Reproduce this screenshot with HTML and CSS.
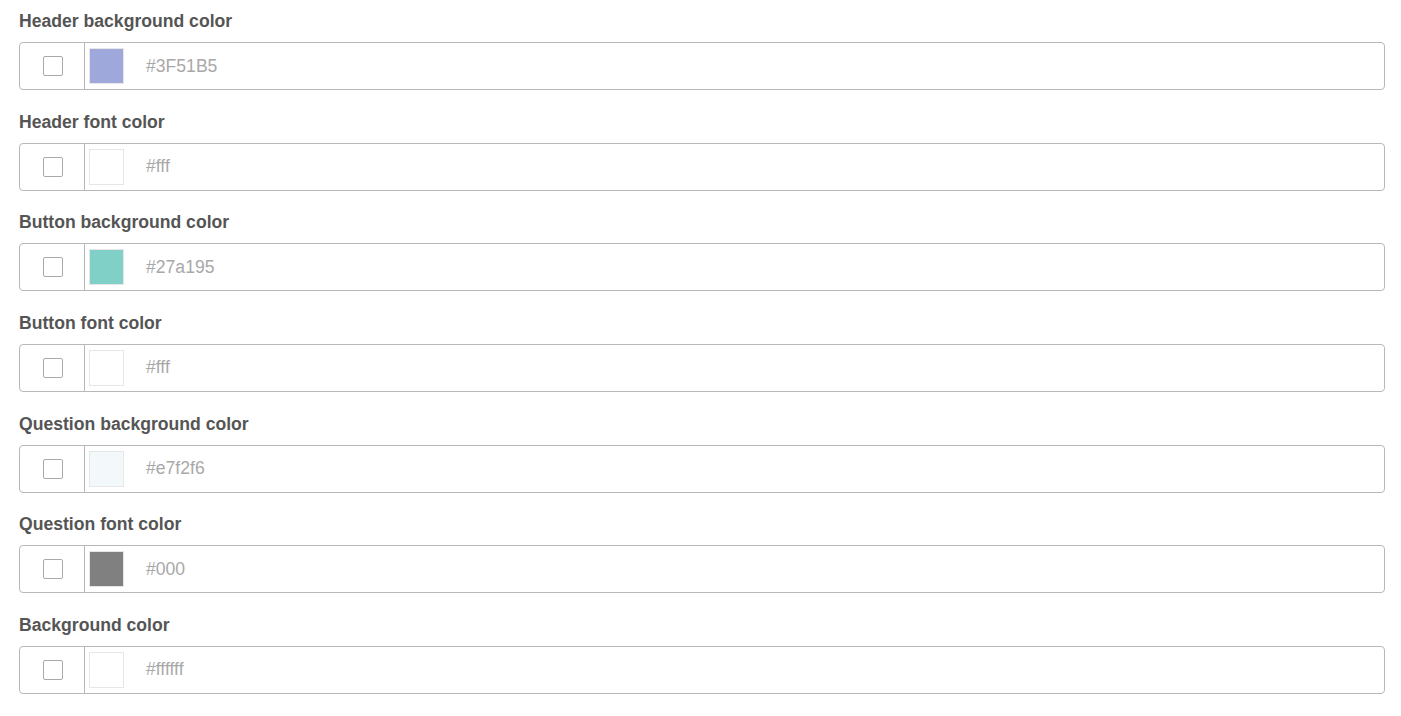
FILE: index.html
```html
<!DOCTYPE html>
<html>
<head>
<meta charset="utf-8">
<link rel="stylesheet" href="styles.css">
</head>
<body>
<div class="form">
  <div class="field">
    <div class="label">Header background color</div>
    <div class="box">
      <div class="check-cell"><span class="check"></span></div>
      <div class="value-cell"><span class="swatch indigo"></span><span class="hex">#3F51B5</span></div>
    </div>
  </div>
  <div class="field">
    <div class="label">Header font color</div>
    <div class="box">
      <div class="check-cell"><span class="check"></span></div>
      <div class="value-cell"><span class="swatch white"></span><span class="hex">#fff</span></div>
    </div>
  </div>
  <div class="field">
    <div class="label">Button background color</div>
    <div class="box">
      <div class="check-cell"><span class="check"></span></div>
      <div class="value-cell"><span class="swatch teal"></span><span class="hex">#27a195</span></div>
    </div>
  </div>
  <div class="field">
    <div class="label">Button font color</div>
    <div class="box">
      <div class="check-cell"><span class="check"></span></div>
      <div class="value-cell"><span class="swatch white"></span><span class="hex">#fff</span></div>
    </div>
  </div>
  <div class="field">
    <div class="label">Question background color</div>
    <div class="box">
      <div class="check-cell"><span class="check"></span></div>
      <div class="value-cell"><span class="swatch ice"></span><span class="hex">#e7f2f6</span></div>
    </div>
  </div>
  <div class="field">
    <div class="label">Question font color</div>
    <div class="box">
      <div class="check-cell"><span class="check"></span></div>
      <div class="value-cell"><span class="swatch grey"></span><span class="hex">#000</span></div>
    </div>
  </div>
  <div class="field">
    <div class="label">Background color</div>
    <div class="box">
      <div class="check-cell"><span class="check"></span></div>
      <div class="value-cell"><span class="swatch white"></span><span class="hex">#ffffff</span></div>
    </div>
  </div>
</div>
</body>
</html>
```

FILE: styles.css
```css
html, body {
  margin: 0;
  padding: 0;
  background: #fff;
}
body {
  font-family: "Liberation Sans", Arial, sans-serif;
}
.form {
  padding: 10px 16px 0 19px;
  display: flex;
  flex-direction: column;
  gap: 20.67px;
}
.field {
  display: flex;
  flex-direction: column;
  gap: 10px;
}
.label {
  font-size: 17.6px;
  font-weight: bold;
  line-height: 22px;
  color: #555;
}
.box {
  height: 48px;
  box-sizing: border-box;
  border: 1px solid #b8b8b8;
  border-radius: 4px;
  display: flex;
  align-items: stretch;
}
.check-cell {
  width: 64px;
  border-right: 1px solid #b8b8b8;
  display: flex;
  align-items: center;
  justify-content: center;
}
.check {
  box-sizing: border-box;
  width: 20px;
  height: 20px;
  border: 1px solid #aaa;
  border-radius: 2px;
  margin-left: 2px;
}
.value-cell {
  display: flex;
  align-items: center;
  padding-left: 4px;
}
.swatch {
  width: 35px;
  height: 36px;
  box-sizing: border-box;
  border: 1px solid #e6e6e6;
}
.indigo { background: #9fa8da; }
.white { background: #fff; }
.teal { background: #80d0c8; }
.ice { background: #f3f8fa; }
.grey { background: #808080; }
.hex {
  margin-left: 22px;
  font-size: 17.6px;
  color: #a8a8a8;
}
```
